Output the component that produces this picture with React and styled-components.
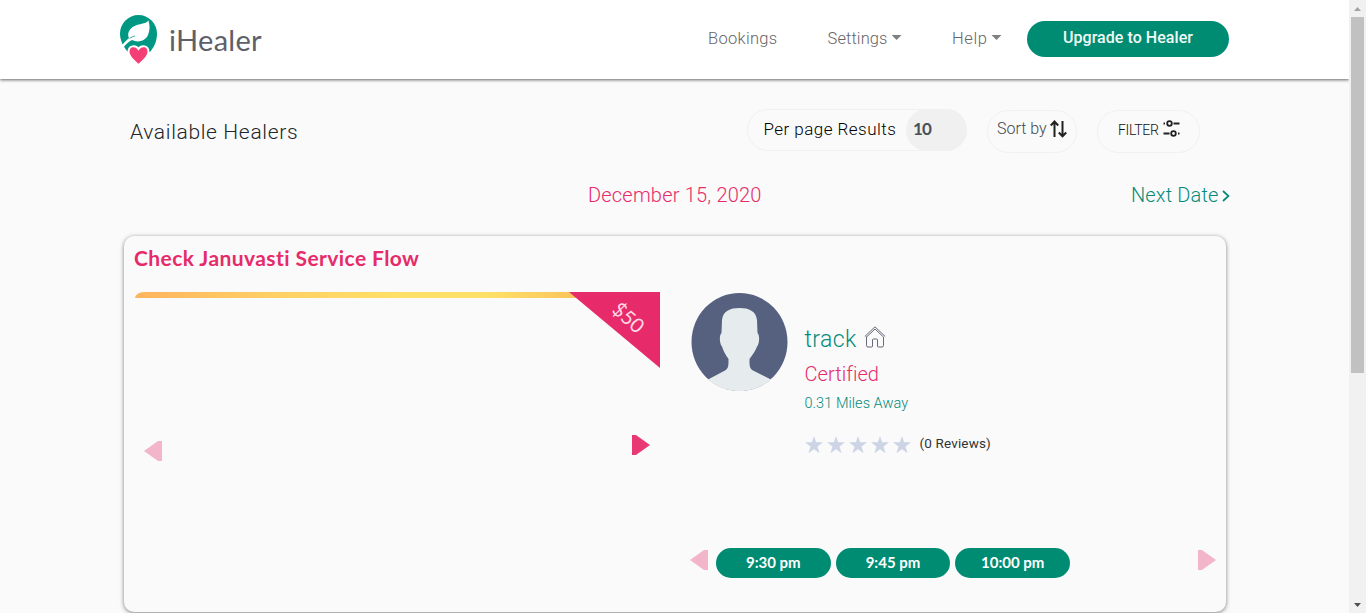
import React from 'react';
import styled, { createGlobalStyle } from 'styled-components';

const green = '#008c72';
const teal = '#048a7b';
const pink = '#e72a69';

const GlobalStyle = createGlobalStyle`
  * { box-sizing: border-box; }
  body { margin: 0; overflow: hidden; background: #fafafa; font-family: Lato, "Liberation Sans", sans-serif; }
`;

const Viewport = styled.div`
  display: grid;
  grid-template-columns: minmax(0, 1fr) 17px;
  height: 613px;
`;
const Page = styled.div`
  overflow: hidden;
  background: #fafafa;
`;
const Header = styled.header`
  display: flex;
  align-items: flex-start;
  height: 79px;
  padding-left: 120px;
  background: #fff;
  box-shadow: 0 1px 3px rgba(0, 0, 0, 0.6);
`;
const Label = styled.span`
  display: block;
  flex: none;
  white-space: nowrap;
  color: ${(p) => p.$color || '#212529'};
  font-size: ${(p) => p.$size || 16}px;
  font-weight: ${(p) => p.$weight || 400};
  line-height: ${(p) => p.$line || 24}px;
  letter-spacing: ${(p) => p.$track || 0}px;
`;
const LightLabel = styled(Label)`
  font-family: Roboto, "Liberation Sans", sans-serif;
  font-weight: ${(p) => p.$weight || 300};
`;
const Brand = styled.a`
  display: flex;
  gap: 11px;
  width: 588px;
  padding-top: 15px;
`;
const BrandName = styled(Label)`
  padding-top: 7px;
`;
const Nav = styled.nav`
  display: flex;
  padding-top: 27px;
`;
const NavItem = styled.a`
  display: flex;
  width: ${(p) => p.$width}px;
`;
const Caret = styled.i`
  width: 10px;
  height: 5px;
  margin: 8px 0 0 4px;
  background: #808080;
  clip-path: polygon(0 0, 100% 0, 50% 100%);
`;
const Pill = styled.button`
  display: flex;
  justify-content: center;
  flex: none;
  width: ${(p) => p.$width}px;
  height: ${(p) => p.$height}px;
  margin: ${(p) => p.$top || 0}px 0 0;
  padding: ${(p) => p.$pad}px 0 0;
  border: 0;
  border-radius: 20px;
  background: ${green};
  font-family: inherit;
`;
const Toolbar = styled.div`
  display: flex;
  align-items: flex-start;
  height: 103px;
  padding: 30px 0 0 130px;
`;
const PageTitle = styled.div`
  width: 617px;
  padding-top: 11px;
`;
const Control = styled.div`
  display: flex;
  width: ${(p) => p.$width}px;
  height: ${(p) => p.$height}px;
  margin: ${(p) => p.$top || 0}px 20px 0 0;
  padding-left: ${(p) => p.$left}px;
  padding-top: ${(p) => p.$pad}px;
  border: 1px solid #f1f1f1;
  border-radius: 22px;
`;
const PageCount = styled.div`
  width: 61px;
  height: 42px;
  margin: -8px -1px 0 auto;
  padding: 8px 0 0 7px;
  border-radius: 21px;
  background: #f0f0f0;
`;
const DateBar = styled.div`
  display: grid;
  grid-template-columns: 588px 543px 1fr;
  height: 54px;
`;
const NextDate = styled.a`
  grid-column: 3;
  display: flex;
`;
const Card = styled.section`
  width: 1102px;
  height: 376px;
  margin-left: 124px;
  padding: 9px 10px 10px;
  border-radius: 10px;
  box-shadow: 0 1px 4px 0 rgba(0, 0, 0, 0.5);
`;
const CardBody = styled.div`
  display: grid;
  grid-template-columns: 556px 1fr;
  margin-top: 21px;
`;
const Gallery = styled.div`
  display: flex;
  flex-direction: column;
  width: 526px;
`;
const Banner = styled.div`
  display: flex;
  height: 76px;
  padding-left: 1px;
`;
const Stripe = styled.div`
  width: 442px;
  height: 6px;
  margin-right: -8px;
  border-top-left-radius: 9px 6px;
  background: linear-gradient(90deg, #ffb45f, #ffd064 32%, #ffe066 60%, #ffe066 80%, #f9c45c);
`;
const Ribbon = styled.div`
  width: 91px;
  height: 76px;
  padding: 11px 0 0 42px;
  background: ${pink};
  clip-path: polygon(0 0, 100% 0, 100% 100%);
`;
const Price = styled(Label)`
  width: 36px;
  text-align: center;
  transform: rotate(42deg);
`;
const GalleryControls = styled.div`
  display: flex;
  justify-content: space-between;
  align-items: flex-start;
  margin-top: 67px;
  padding: 0 10px;
`;
const Arrow = styled.i`
  flex: none;
  width: 18px;
  height: 20px;
  margin-top: ${(p) => p.$top || 0}px;
  background: ${pink};
  opacity: ${(p) => (p.$muted ? 0.33 : 0.93)};
  clip-path: polygon(0 0, 22% 0, 100% 50%, 22% 100%, 0 100%);
  transform: ${(p) => (p.$back ? 'scaleX(-1)' : 'none')};
`;
const Provider = styled.div`
  display: flex;
  flex-direction: column;
`;
const Profile = styled.div`
  display: flex;
  gap: 17px;
  height: 256px;
  padding: 1px 0 0 0.5px;
`;
const Details = styled.div`
  display: flex;
  flex-direction: column;
  padding-top: 33px;
`;
const NameRow = styled.div`
  display: flex;
  gap: 7px;
  height: 33px;
`;
const Rating = styled.div`
  display: flex;
  margin-top: 15px;
`;
const Slots = styled.div`
  display: flex;
  align-items: flex-start;
  gap: 5px;
  width: 526px;
`;
const SlotGroup = styled.div`
  display: flex;
  flex: 1;
  gap: 5px;
  padding-left: 3px;
`;
const Scrollbar = styled.div`
  display: flex;
  flex-direction: column;
  align-items: center;
  justify-content: space-between;
  padding: 7px 0 6px;
  background: #f1f1f1;
`;
const ScrollArrow = styled.i`
  width: 7px;
  height: 4px;
  background: ${(p) => (p.$up ? '#a3a3a3' : '#505050')};
  clip-path: ${(p) => (p.$up ? 'polygon(50% 0, 100% 100%, 0 100%)' : 'polygon(0 0, 100% 0, 50% 100%)')};
`;
const Thumb = styled.div`
  width: 13px;
  height: 356px;
  margin: 6px 0 auto;
  background: #c1c1c1;
`;

const Logo = () => (
  <svg width="38" height="50" viewBox="0 0 38 50">
    <path fill="#009783" d="M18.500 0A18.500 18.500 0 0 0 0 18.500C0 25 3 31 7.500 36.500L30 37C35 31 37 25 37 18.500A18.500 18.500 0 0 0 18.500 0Z" />
    <path fill="#fff" d="M28.500 5.500C25 10 16 8 10.500 14C7.500 17.500 8 21 9 23C6.500 25 3.500 28 1.500 31L3 33C6 29 9 26.500 12 25C18 28 25.500 26 28 20C30 15 30 11 28.500 5.500Z" />
    <path stroke="#009783" strokeWidth=".8" fill="none" d="M9.500 23.500C11.500 22 13 21.500 15 21" />
    <path fill="#f43f76" stroke="#fff" strokeWidth="2" d="M18.500 50C14 46 8.500 42 8.500 37C8.500 30.500 15.500 29.500 18.500 34C21.500 29.500 28.500 30.500 28.500 37C28.500 42 23 46 18.500 50Z" />
  </svg>
);

const SortIcon = () => (
  <svg width="18" height="18" viewBox="0 0 18 18" fill="none" stroke="#212121" strokeWidth="2">
    <path d="M4.500 17V2M.8 5.500L4.500 1.500L8.200 5.500M12.500 1V16M8.800 12.500L12.500 16.300L16.200 12.500" />
  </svg>
);

const FilterIcon = () => (
  <svg width="17" height="17" viewBox="0 0 17 17" fill="none" stroke="#212121" strokeWidth="1.8">
    <circle cx="6.500" cy="3.500" r="2.300" />
    <circle cx="10.500" cy="13.500" r="2.300" />
    <path d="M.5 3.500H2M10.500 3.500H16.500M.5 13.500H6.500M15 13.500H16.500" />
  </svg>
);

const Avatar = () => (
  <svg width="97" height="98" viewBox="0 0 97 98">
    <ellipse cx="48.500" cy="49" rx="48" ry="49" fill="#566180" />
    <path fill="#e6ebed" d="M17 86.500L34 77.500C37.500 75.500 37.500 73 37.500 66C34 61 32 57 31 53.500C28.500 51 28 42 30.500 40L31 27C32 18 39 15 48.500 15C58 15 65 18 66 27L66.500 40C69 42 68.500 51 66 53.500C65 57 62 61 58.500 66C58.500 73 58.500 75.500 62 77.500L80 86.500C62 102 35 102 17 86.500Z" />
  </svg>
);

const HomeIcon = () => (
  <svg width="22" height="22" viewBox="0 0 22 22" fill="none" stroke="#55576c" strokeWidth=".9">
    <path d="M.8 10.500L11 .8L21.200 10.500M2.500 11L11 3L19.500 11V19.500Q19.500 21 18 21H14.500Q13.500 21 13.500 20V14Q13.500 13 12.500 13H9.500Q8.500 13 8.500 14V20Q8.500 21 7.500 21H4Q2.500 21 2.500 19.500V10.500" />
  </svg>
);

const Stars = () => (
  <svg width="107" height="18" viewBox="0 0 107 18" fill="#cdd4e5">
    {[0, 22, 44, 66, 88].map((x) => (
      <path key={x} transform={`translate(${x} 0)`} d="M9 0L11.100 6.300H18L12.500 10.500L14.600 17.200L9 13.200L3.400 17.200L5.500 10.500L0 6.300H6.900Z" />
    ))}
  </svg>
);

const Chevron = () => (
  <svg width="8" height="12" viewBox="0 0 8 12" fill="none" stroke={teal} strokeWidth="1.700">
    <path d="M1 1L6.500 6L1 11" />
  </svg>
);
const IconBox = styled.span`
  padding: ${(p) => p.$top || 0}px 0 0 ${(p) => p.$left || 0}px;
  line-height: 0;
`;

export default function App() {
  return (
    <>
      <GlobalStyle />
      <Viewport>
        <Page>
          <Header>
            <Brand>
              <Logo />
              <BrandName $size={29} $line={36} $track={0.3} $color="#5d6068">iHealer</BrandName>
            </Brand>
            <Nav>
              <NavItem $width={119.5}><LightLabel $size={16.5} $track={0.3} $color="#666">Bookings</LightLabel></NavItem>
              <NavItem $width={124.5}><LightLabel $size={16.5} $track={0.1} $color="#666">Settings</LightLabel><Caret /></NavItem>
              <NavItem $width={75}><LightLabel $size={16.5} $track={0.6} $color="#666">Help</LightLabel><Caret /></NavItem>
            </Nav>
            <Pill $width={202} $height={36} $top={21} $pad={5}>
              <LightLabel $size={16} $weight={500} $track={0.05} $color="#f0faf7">Upgrade to Healer</LightLabel>
            </Pill>
          </Header>
          <Toolbar>
            <PageTitle><LightLabel $size={21} $track={0.65}>Available Healers</LightLabel></PageTitle>
            <Control $width={220} $height={42} $left={15.5} $pad={7}>
              <LightLabel $size={17} $track={0.46} $color="#000">Per page Results</LightLabel>
              <PageCount><Label $size={17} $weight={700} $track={-0.8} $color="#495057">10</Label></PageCount>
            </Control>
            <Control $width={90} $height={43} $top={1} $left={9} $pad={6}>
              <LightLabel $size={16} $color="#45494e">Sort by</LightLabel>
              <IconBox $top={3} $left={3}><SortIcon /></IconBox>
            </Control>
            <Control $width={103} $height={43} $top={1} $left={20} $pad={7}>
              <LightLabel $size={14} $track={-0.3} $color="#111">FILTER</LightLabel>
              <IconBox $top={2} $left={4}><FilterIcon /></IconBox>
            </Control>
          </Toolbar>
          <DateBar>
            <span />
            <LightLabel $size={20} $line={26} $track={0.2} $color={pink}>December 15, 2020</LightLabel>
            <NextDate>
              <LightLabel $size={20} $line={26} $track={0.15} $color={teal}>Next Date</LightLabel>
              <IconBox $top={8} $left={3}><Chevron /></IconBox>
            </NextDate>
          </DateBar>
          <Card>
            <Label $size={21} $weight={700} $line={26} $track={0.42} $color={pink}>Check Januvasti Service Flow</Label>
            <CardBody>
              <Gallery>
                <Banner>
                  <Stripe />
                  <Ribbon><Price $size={20} $line={28} $color="#ffd8e5">$50</Price></Ribbon>
                </Banner>
                <GalleryControls><Arrow $back $muted $top={6} /><Arrow /></GalleryControls>
              </Gallery>
              <Provider>
                <Profile>
                  <Avatar />
                  <Details>
                    <NameRow>
                      <LightLabel $size={23} $weight={300} $line={28} $track={0.4} $color={teal}>track</LightLabel>
                      <HomeIcon />
                    </NameRow>
                    <LightLabel $size={20} $line={30} $track={0.05} $color={pink}>Certified</LightLabel>
                    <LightLabel $size={14.5} $line={30} $track={0.05} $color={teal}>0.31 Miles Away</LightLabel>
                    <Rating>
                      <IconBox $top={2}><Stars /></IconBox>
                      <IconBox $left={8}><LightLabel $size={13.5} $weight={400} $line={18} $track={0.15} $color="#333">(0 Reviews)</LightLabel></IconBox>
                    </Rating>
                  </Details>
                </Profile>
                <Slots>
                  <Arrow $back $muted $top={2} />
                  <SlotGroup>
                    {['9:30 pm', '9:45 pm', '10:00 pm'].map((time) => (
                      <Pill key={time} $width={114.7} $height={30} $pad={2}>
                        <Label $size={15} $weight={700} $color="#fff">{time}</Label>
                      </Pill>
                    ))}
                  </SlotGroup>
                  <Arrow $muted $top={2} />
                </Slots>
              </Provider>
            </CardBody>
          </Card>
        </Page>
        <Scrollbar>
          <ScrollArrow $up />
          <Thumb />
          <ScrollArrow />
        </Scrollbar>
      </Viewport>
    </>
  );
}
